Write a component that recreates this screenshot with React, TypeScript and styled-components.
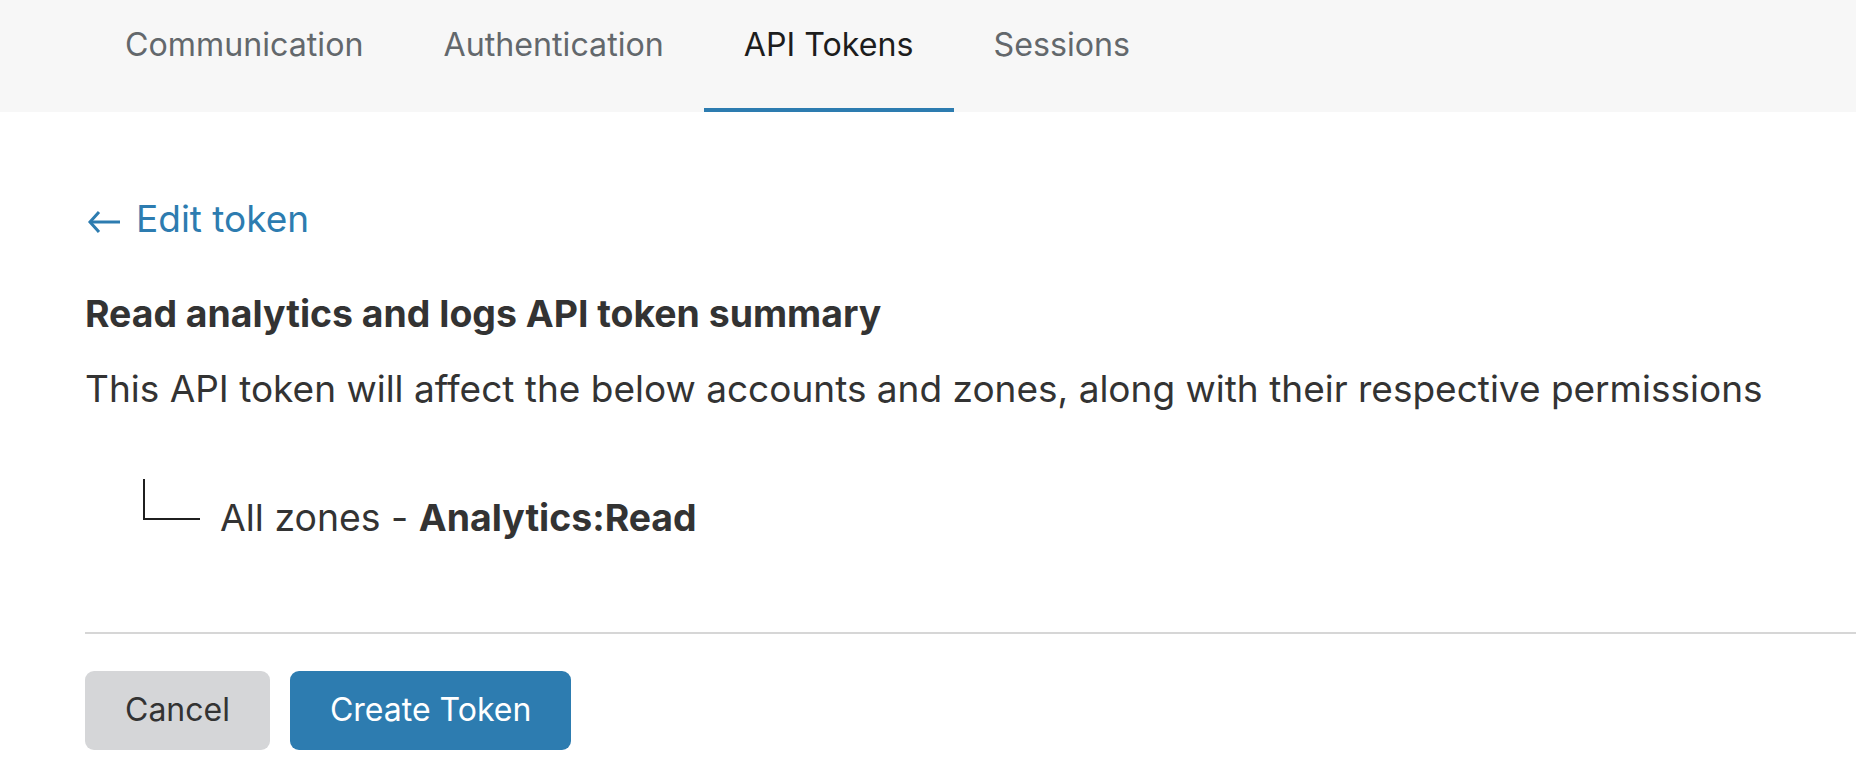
import React from "react";
import styled, { createGlobalStyle } from "styled-components";

const GlobalStyle = createGlobalStyle`
  html, body {
    margin: 0;
    padding: 0;
    background: #ffffff;
  }
  body {
    font-family: Inter, "Noto Sans", "Liberation Sans", sans-serif;
    color: #333333;
  }
  * { box-sizing: border-box; }
`;

const BLUE = "#2d7cb0";

const Page = styled.div`
  width: 1856px;
  min-height: 776px;
  background: #ffffff;
  overflow: hidden;
`;

const TabBar = styled.nav`
  display: flex;
  height: 112px;
  padding-left: 85px;
  background: #f7f7f7;
`;

const Tab = styled.div<{ $active?: boolean }>`
  display: flex;
  align-items: flex-start;
  padding: 26px 40px 0;
  font-size: 32.2px;
  line-height: 1.2;
  color: ${(p) => (p.$active ? "#1d1d1d" : "#63686c")};
  border-bottom: 4px solid ${(p) => (p.$active ? BLUE : "transparent")};
  white-space: nowrap;
`;

const Content = styled.main`
  display: flex;
  flex-direction: column;
  align-items: flex-start;
  padding-left: 85px;
`;

const BackLink = styled.a`
  display: flex;
  align-items: center;
  gap: 15px;
  margin-top: 85px;
  font-size: 37px;
  line-height: 1.2;
  color: ${BLUE};
  text-decoration: none;
  cursor: pointer;
`;

const ArrowIcon = styled.svg`
  width: 34px;
  height: 26px;
  margin-left: 2px;
  margin-top: 6px;
  flex-shrink: 0;
`;

const Heading = styled.h2`
  margin: 51px 0 0;
  font-size: 37.4px;
  font-weight: 700;
  line-height: 1.2;
  color: #333333;
`;

const Description = styled.p`
  margin: 30px 0 0;
  font-size: 37px;
  line-height: 1.2;
  color: #333333;
  white-space: nowrap;
`;

const TreeRow = styled.div`
  display: flex;
  align-items: flex-start;
  gap: 20px;
  margin-top: 67px;
  padding-left: 58px;
`;

const Connector = styled.span`
  display: block;
  width: 57px;
  height: 41px;
  border-left: 2px solid #1f1f1f;
  border-bottom: 2px solid #1f1f1f;
`;

const TreeLabel = styled.span`
  margin-top: 17px;
  font-size: 37.4px;
  line-height: 1.2;
  color: #333333;

  strong {
    font-weight: 700;
  }
`;

const Divider = styled.hr`
  align-self: stretch;
  margin: 91px 0 0;
  border: none;
  height: 2px;
  background: #d6d6d6;
`;

const Actions = styled.div`
  display: flex;
  gap: 20px;
  margin-top: 37px;
`;

const Button = styled.button<{ $primary?: boolean }>`
  height: 79px;
  padding: 0 40px;
  border: none;
  border-radius: 9px;
  font-family: Inter, "Noto Sans", "Liberation Sans", sans-serif;
  font-size: 32px;
  line-height: 1;
  cursor: pointer;
  background: ${(p) => (p.$primary ? BLUE : "#d5d6d8")};
  color: ${(p) => (p.$primary ? "#ffffff" : "#333333")};
`;

export default function App() {
  return (
    <Page>
      <GlobalStyle />
      <TabBar>
        <Tab>Communication</Tab>
        <Tab>Authentication</Tab>
        <Tab $active>API Tokens</Tab>
        <Tab>Sessions</Tab>
      </TabBar>
      <Content>
        <BackLink>
          <ArrowIcon viewBox="0 0 34 26" fill="none" stroke={BLUE} strokeWidth="3" strokeLinecap="butt" strokeLinejoin="miter">
            <path d="M33 13 H3" />
            <path d="M12 3 L3 13 L12 23" />
          </ArrowIcon>
          Edit token
        </BackLink>
        <Heading>Read analytics and logs API token summary</Heading>
        <Description>
          This API token will affect the below accounts and zones, along with their respective permissions
        </Description>
        <TreeRow>
          <Connector />
          <TreeLabel>
            All zones - <strong>Analytics:Read</strong>
          </TreeLabel>
        </TreeRow>
        <Divider />
        <Actions>
          <Button>Cancel</Button>
          <Button $primary>Create Token</Button>
        </Actions>
      </Content>
    </Page>
  );
}
